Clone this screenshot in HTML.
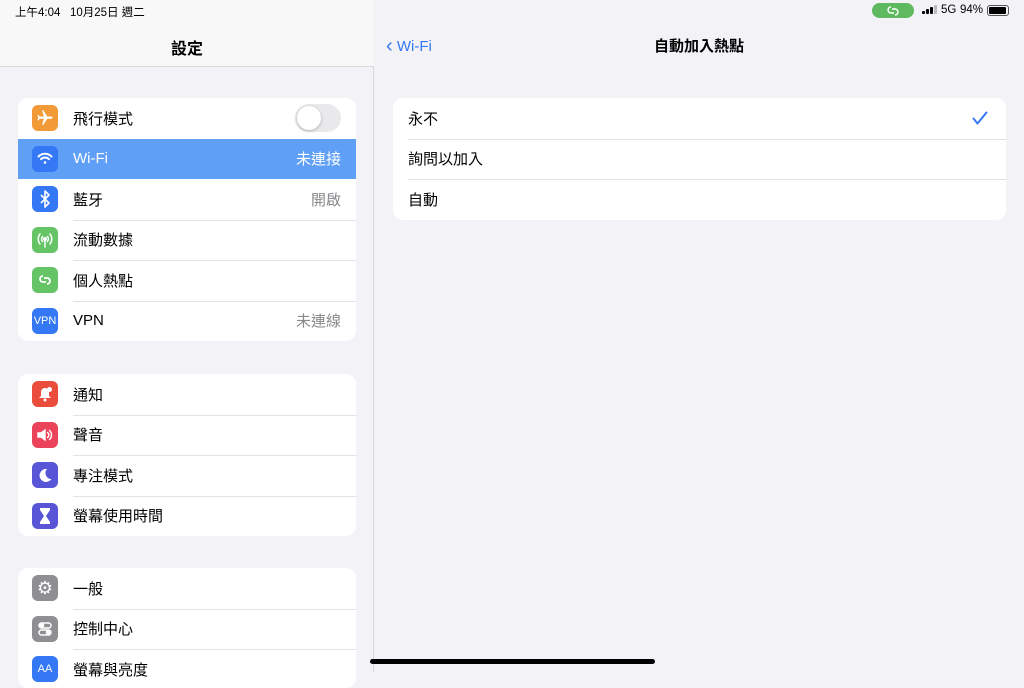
<!DOCTYPE html><html><head><meta charset="utf-8"><style>
*{margin:0;padding:0;box-sizing:border-box}
body{width:1024px;height:672px;overflow:hidden;background:#f2f2f7;font-family:"Liberation Sans","Noto Sans CJK TC",sans-serif;position:relative;color:#000}
.left{position:absolute;left:0;top:0;width:374px;height:672px;background:#f2f2f7;border-right:1px solid #d8d8dc}
.lhead{position:absolute;left:0;top:0;width:374px;height:67px;background:#f8f8f8;border-bottom:1px solid #dcdcdc}
.time{position:absolute;left:15px;top:4px;font-size:11.5px}
.ltitle{position:absolute;left:0;width:374px;top:35px;text-align:center;font-size:16px;font-weight:bold}
.grp{position:absolute;left:18px;width:338px;background:#fff;border-radius:10px;overflow:hidden}
.row{height:40.5px;position:relative;display:flex;align-items:center}
.row .ic{position:absolute;left:14px;top:7px;width:26px;height:26px;border-radius:6px;display:flex;align-items:center;justify-content:center;color:#fff;font-size:11px}
.row .t{position:absolute;left:55px;font-size:15px}
.row .v{position:absolute;right:15px;font-size:15px;color:#8a8a8e}
.row+.row::before{content:"";position:absolute;left:55px;right:0;top:0;border-top:1px solid #e2e2e6}
.sel{background:#5f9ff5}.sel .t,.sel .v{color:#fff}
.sel::before,.sel+.row::before{display:none}
.tog{position:absolute;right:15px;top:6px;width:46px;height:28px;border-radius:14px;background:#e9e9eb}
.tog::after{content:"";position:absolute;left:2px;top:2px;width:24px;height:24px;border-radius:12px;background:#fff;box-shadow:0 1px 3px rgba(0,0,0,.25)}
.back{position:absolute;left:386px;top:34px;color:#3478f6;font-size:15px}
.rtitle{position:absolute;left:374px;right:0;top:35px;text-align:center;font-size:15px;font-weight:bold}
.card{position:absolute;left:393px;top:98px;width:613px;background:#fff;border-radius:10px;overflow:hidden}
.card .row .t{left:15px}
.card .row+.row::before{left:15px}
.home{position:absolute;left:370px;top:659px;width:285px;height:5px;border-radius:3px;background:#000}
.sb{position:absolute;top:4px;font-size:11.5px}
.bar{position:absolute;width:3px;background:#000;border-radius:1px}
</style></head><body>
<div class="left">
<div class="lhead"><div class="time">上午4:04&nbsp;&nbsp; 10月25日 週二</div><div class="ltitle">設定</div></div>
<div class="grp" style="top:98px">
<div class="row"><div class="ic" style="background:#f19a37"><svg width="18" height="18" viewBox="0 0 24 24" fill="#fff"><path d="M21 16v-2l-8-5V3.5a1.5 1.5 0 0 0-3 0V9l-8 5v2l8-2.5V19l-2 1.5V22l3.5-1 3.5 1v-1.5L13 19v-5.5z" transform="rotate(90 12 12)"/></svg></div><div class="t">飛行模式</div><div class="tog"></div></div>
<div class="row sel"><div class="ic" style="background:#3478f6"><svg width="16" height="13" viewBox="0 0 16 13" fill="none" stroke="#fff" stroke-width="2" stroke-linecap="round"><path d="M1.5 4.5a9 9 0 0 1 13 0M4 7.2a5.5 5.5 0 0 1 8 0"/><circle cx="8" cy="10.5" r="1.3" fill="#fff" stroke="none"/></svg></div><div class="t">Wi-Fi</div><div class="v">未連接</div></div>
<div class="row"><div class="ic" style="background:#3478f6"><svg width="12" height="18" viewBox="0 0 12 18" fill="none" stroke="#fff" stroke-width="1.6" stroke-linejoin="round"><path d="M2 5l8 8-4 4V1l4 4-8 8"/></svg></div><div class="t">藍牙</div><div class="v">開啟</div></div>
<div class="row"><div class="ic" style="background:#65c466"><svg width="18" height="16" viewBox="0 0 18 16" fill="none" stroke="#fff" stroke-width="1.5" stroke-linecap="round"><path d="M4 2a8 8 0 0 0 0 10M14 2a8 8 0 0 1 0 10M6.5 4.5a4 4 0 0 0 0 5M11.5 4.5a4 4 0 0 1 0 5M9 7v8"/><circle cx="9" cy="7" r="1.3" fill="#fff"/></svg></div><div class="t">流動數據</div></div>
<div class="row"><div class="ic" style="background:#65c466"><svg width="16" height="16" viewBox="0 0 16 16" fill="none" stroke="#fff" stroke-width="1.8"><path d="M6 4a3 3 0 1 0 0 6h3M10 12a3 3 0 1 0 0-6H7"/></svg></div><div class="t">個人熱點</div></div>
<div class="row"><div class="ic" style="background:#3478f6">VPN</div><div class="t">VPN</div><div class="v">未連線</div></div>
</div>
<div class="grp" style="top:374px">
<div class="row"><div class="ic" style="background:#eb4d3d"><svg width="16" height="16" viewBox="0 0 16 16" fill="#fff"><path d="M8 2a4 4 0 0 0-4 4v4l-2 2h12l-2-2V6a4 4 0 0 0-4-4z"/><circle cx="8" cy="14" r="1.5"/><circle cx="12.5" cy="3.5" r="2.5"/></svg></div><div class="t">通知</div></div>
<div class="row"><div class="ic" style="background:#eb445a"><svg width="18" height="16" viewBox="0 0 18 16" fill="#fff" stroke="#fff" stroke-width="1.4" stroke-linecap="round"><path d="M2 6h3l4-3v10l-4-3H2z" /><path d="M11.5 5.5a3 3 0 0 1 0 5M13.5 3.5a6 6 0 0 1 0 9" fill="none"/></svg></div><div class="t">聲音</div></div>
<div class="row"><div class="ic" style="background:#5856d6"><svg width="16" height="16" viewBox="0 0 16 16" fill="#fff"><path d="M10 2a6.5 6.5 0 1 0 4.5 10A6 6 0 0 1 10 2z"/></svg></div><div class="t">專注模式</div></div>
<div class="row"><div class="ic" style="background:#5856d6"><svg width="14" height="18" viewBox="0 0 14 18" fill="#fff"><path d="M2 1h10v2l-4 6 4 6v2H2v-2l4-6-4-6z"/></svg></div><div class="t">螢幕使用時間</div></div>
</div>
<div class="grp" style="top:568px;height:120px">
<div class="row"><div class="ic" style="background:#8e8e93;font-size:18px">⚙</div><div class="t">一般</div></div>
<div class="row"><div class="ic" style="background:#8e8e93"><svg width="16" height="16" viewBox="0 0 16 16" fill="none" stroke="#fff" stroke-width="1.5"><rect x="2" y="2" width="12" height="5" rx="2.5"/><rect x="2" y="9" width="12" height="5" rx="2.5"/><circle cx="5" cy="4.5" r="1.5" fill="#fff"/><circle cx="11" cy="11.5" r="1.5" fill="#fff"/></svg></div><div class="t">控制中心</div></div>
<div class="row"><div class="ic" style="background:#3478f6">AA</div><div class="t">螢幕與亮度</div></div>
</div>
</div>
<div style="position:absolute;left:872px;top:3px;width:42px;height:15px;border-radius:8px;background:#5fb95f;display:flex;align-items:center;justify-content:center"><svg width="16" height="12" viewBox="0 0 16 12" fill="none" stroke="#fff" stroke-width="1.4"><path d="M6 2a3 3 0 1 0 0 6h3M10 10a3 3 0 1 0 0-6H7"/></svg></div>
<div class="bar" style="left:922px;top:11px;height:3px"></div>
<div class="bar" style="left:926px;top:9px;height:5px"></div>
<div class="bar" style="left:930px;top:7px;height:7px"></div>
<div class="bar" style="left:934px;top:5px;height:9px;background:#bbb"></div>
<div class="sb" style="left:941px">5G</div>
<div class="sb" style="left:960px">94%</div>
<div style="position:absolute;left:987px;top:5px;width:22px;height:11px;border:1px solid #555;border-radius:3px;padding:1px"><div style="background:#000;height:100%;width:94%;border-radius:1px"></div></div>
<div class="back"><span style="font-size:20px;position:relative;top:1px">‹</span> Wi-Fi</div>
<div class="rtitle">自動加入熱點</div>
<div class="card">
<div class="row"><div class="t">永不</div><svg style="position:absolute;right:18px;top:13px" width="16" height="14" viewBox="0 0 16 14" fill="none" stroke="#3478f6" stroke-width="2" stroke-linecap="round" stroke-linejoin="round"><path d="M1.5 7.5l4 5L14.5 1.5"/></svg></div>
<div class="row"><div class="t">詢問以加入</div></div>
<div class="row"><div class="t">自動</div></div>
</div>
<div class="home"></div>
</body></html>
